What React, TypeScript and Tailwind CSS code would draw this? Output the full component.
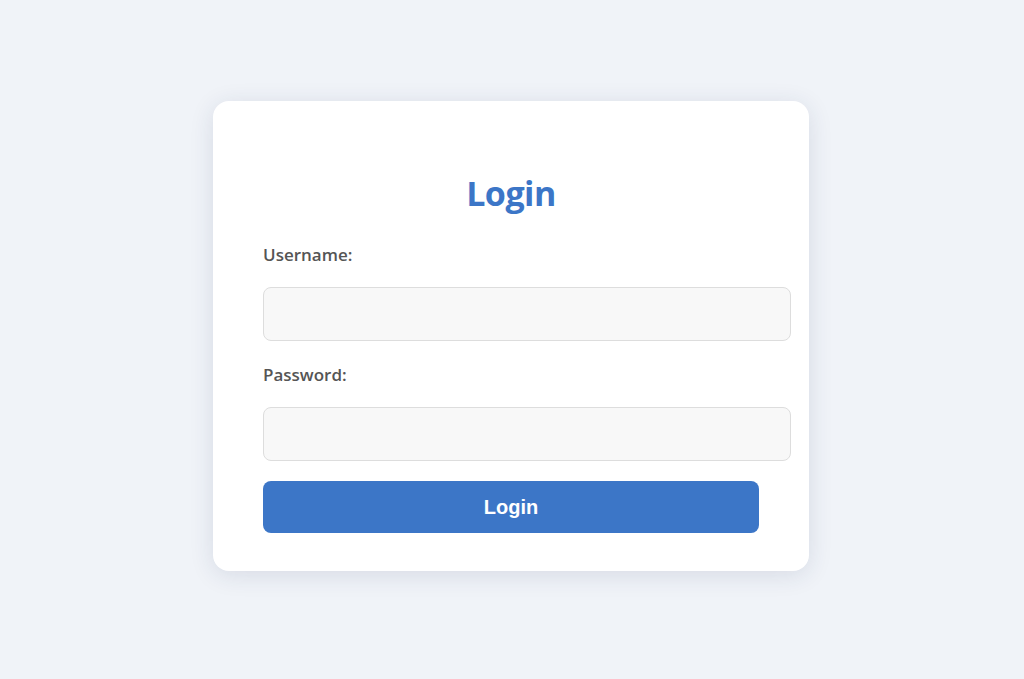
import React from 'react';

const fieldClass =
  'block w-[528px] h-[54px] rounded-lg border border-[#dddddd] bg-[#f8f8f8] px-[15px] text-base text-[#333] outline-none';

const App: React.FC = () => {
  return (
    <div className="min-h-screen w-full bg-[#f0f3f8] pt-[101px] font-['Open_Sans','Noto_Sans',sans-serif]">
      <div className="ml-[213px] w-[596px] rounded-2xl bg-white px-[50px] pt-[50px] pb-[38px] shadow-[0_4px_24px_rgba(30,50,90,0.12)]">
        <h2 className="mt-[20px] h-[44px] text-center text-[34px] leading-[44px] font-bold tracking-[-0.5px] text-[#3c76c7]">Login</h2>

        <form className="mt-[28px]" onSubmit={(e) => e.preventDefault()}>
          <label className="block h-[24px] text-[17px] leading-[24px] font-semibold text-[#555555]">Username:</label>
          <input type="text" className={`${fieldClass} mt-[20px]`} />

          <label className="mt-[22px] block h-[24px] text-[17px] leading-[24px] font-semibold text-[#555555]">Password:</label>
          <input type="password" className={`${fieldClass} mt-[20px]`} />

          <button
            type="submit"
            className="mt-[20px] flex h-[52px] w-full items-center justify-center rounded-lg bg-[#3c76c7] text-[20px] font-bold text-white font-['Liberation_Sans',Arial,sans-serif]"
          >
            Login
          </button>
        </form>
      </div>
    </div>
  );
};

export default App;
